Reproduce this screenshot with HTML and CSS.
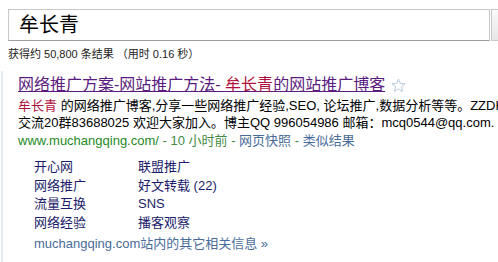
FILE: index.html
```html
<!DOCTYPE html>
<html>
    <head>
        <title>牟长青 - 搜索</title>
        <link rel="stylesheet" href="styles.css">
    </head>
    <body>

        <div class="searchbar">
            <div class="searchbox">牟长青</div>
            <div class="searchbutton"></div>
        </div>

        <p class="stats">获得约 50,800 条结果 （用时 0.16 秒）</p>

        <div class="results">
            <p class="title">
                <a href="#">网络推广方案-网站推广方法- <span class="hit">牟长青</span>的网站推广博客</a>
                <svg class="star" width="15" height="15" viewBox="0 0 15 15">
                    <path d="M7.5 1 L9.3 5.5 L14 5.8 L10.4 8.9 L11.6 13.6 L7.5 11 L3.4 13.6 L4.6 8.9 L1 5.8 L5.7 5.5 Z" fill="none" stroke="#b8c8dc" stroke-width="1"/>
                </svg>
            </p>
            <p class="snippet"><span class="hit">牟长青</span> 的网络推广博客,分享一些网络推广经验,SEO, 论坛推广,数据分析等等。ZZDH<br>交流20群83688025 欢迎大家加入。博主QQ 996054986 邮箱：mcq0544@qq.com.</p>
            <p class="urlline"><span class="url">www.muchangqing.com/</span> - 10 小时前 - <a href="#" class="gray">网页快照</a> - <a href="#" class="gray">类似结果</a></p>

            <div class="sitelinks">
                <a href="#">开心网</a>
                <a href="#">联盟推广</a>
                <a href="#">网络推广</a>
                <a href="#">好文转载 (22)</a>
                <a href="#">流量互换</a>
                <a href="#">SNS</a>
                <a href="#">网络经验</a>
                <a href="#">播客观察</a>
            </div>

            <p class="more"><a href="#">muchangqing.com站内的其它相关信息 »</a></p>
        </div>

    </body>
</html>
```

FILE: styles.css
```css
body{
    margin:0;
    background-color:white;
    color:black;
    font-family:"Liberation Sans", "Noto Sans CJK SC", Arial, sans-serif;
    overflow:hidden;
}

p{
    margin:0;
}

a{
    text-decoration:none;
}

.searchbar{
    display:flex;
    margin:9px 0 0 8px;
}

.searchbox{
    width:470px;
    height:30px;
    padding-left:10px;
    border:1px solid #c8c8c8;
    border-bottom-color:#a0a0a0;
    font-size:20px;
    line-height:30px;
}

.searchbutton{
    flex:1;
    height:30px;
    margin-left:1px;
    border:1px solid #c8c8c8;
    border-right:none;
    background:linear-gradient(#fafafa, #e6e6e6);
}

.stats{
    margin:5px 0 0 8px;
    font-size:11px;
    line-height:16px;
    color:#222;
}

.results{
    margin-top:9px;
    margin-left:1px;
    padding-left:15px;
    border-left:2px solid #e4edf7;
    height:200px;
}

.title{
    display:flex;
    align-items:center;
    font-size:16px;
    line-height:24px;
    padding-top:2px;
}

.title a{
    color:#5a1b7e;
    text-decoration:underline;
}

.title .hit{
    color:#b0103c;
}

.star{
    margin-left:6px;
}

.snippet{
    font-size:13px;
    line-height:17px;
    white-space:nowrap;
}

.snippet .hit{
    color:#b0103c;
}

.urlline{
    font-size:13px;
    line-height:20px;
    color:#3f8a3f;
}

.url{
    color:#1e8a1e;
}

.gray{
    color:#4a6c9a;
}

.sitelinks{
    display:grid;
    grid-template-columns:104px 120px;
    margin:7px 0 0 16px;
    font-size:13px;
    line-height:18.5px;
}

.sitelinks a{
    color:#1c1c6a;
}

.more{
    margin:3px 0 0 16px;
    font-size:13px;
    line-height:18px;
}

.more a{
    color:#4a6c9a;
}
```
